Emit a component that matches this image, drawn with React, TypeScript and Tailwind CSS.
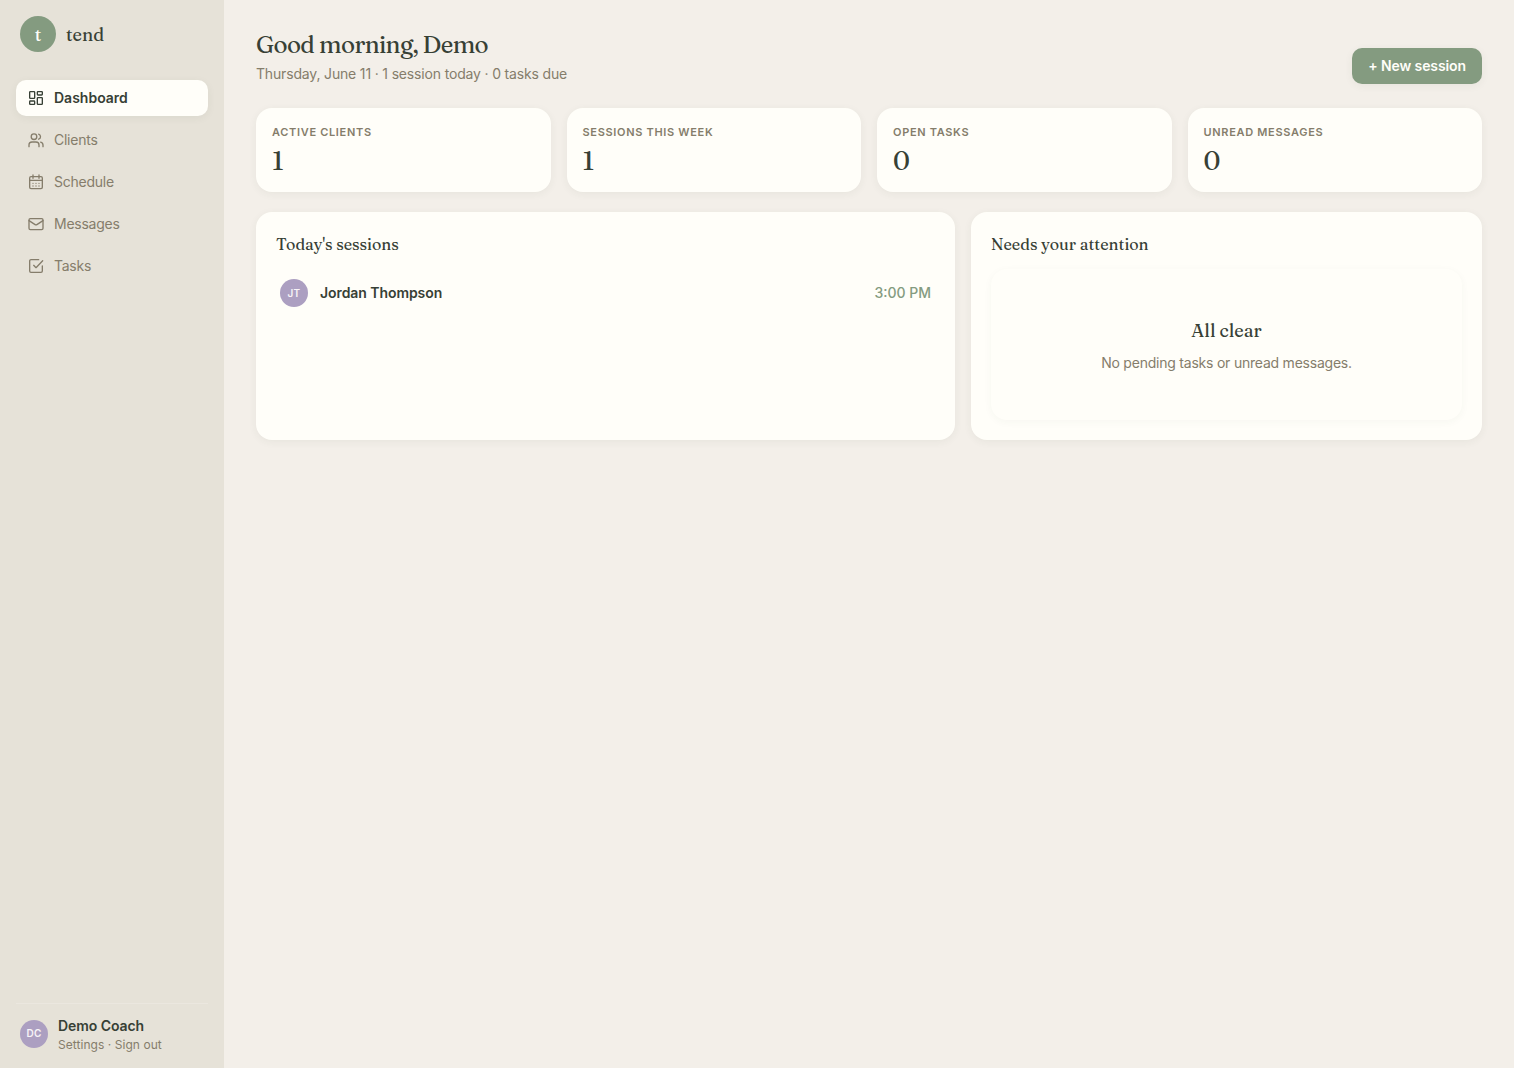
import React from 'react';

interface IconProps {
    children: React.ReactNode;
}

interface NavItem {
    label: string;
    icon: React.ReactNode;
    active?: boolean;
}

interface Stat {
    label: string;
    value: string;
}

function Icon({ children }: IconProps) {
    return (
        <svg className="h-4 w-4 shrink-0" viewBox="0 0 24 24" fill="none" stroke="currentColor" strokeWidth="2" strokeLinecap="round" strokeLinejoin="round">
            {children}
        </svg>
    );
}

const navItems: NavItem[] = [
    {
        label: "Dashboard",
        active: true,
        icon: (
            <Icon>
                <rect x="2.5" y="2.5" width="7.5" height="10" rx="1" />
                <rect x="14" y="2.5" width="7.5" height="5" rx="1" />
                <rect x="14" y="11.5" width="7.5" height="10" rx="1" />
                <rect x="2.5" y="16.5" width="7.5" height="5" rx="1" />
            </Icon>
        ),
    },
    {
        label: "Clients",
        icon: (
            <Icon>
                <circle cx="9" cy="7" r="4.2" />
                <path d="M1.5 22v-2.5a4.5 4.5 0 0 1 4.5-4.5h6a4.5 4.5 0 0 1 4.5 4.5V22" />
                <path d="M16 3.2a4 4 0 0 1 0 7.6" />
                <path d="M19 15.2a4.5 4.5 0 0 1 3.5 4.3V22" />
            </Icon>
        ),
    },
    {
        label: "Schedule",
        icon: (
            <Icon>
                <rect x="2.5" y="4" width="19" height="18" rx="2" />
                <path d="M7.5 1.5v5M16.5 1.5v5M2.5 9.5h19" />
                <path d="M7.5 14h.01M12 14h.01M16.5 14h.01M7.5 18h.01M12 18h.01M16.5 18h.01" />
            </Icon>
        ),
    },
    {
        label: "Messages",
        icon: (
            <Icon>
                <rect x="1.5" y="4" width="21" height="16.5" rx="2" />
                <path d="M1.5 7l9.2 6a2.4 2.4 0 0 0 2.6 0l9.2-6" />
            </Icon>
        ),
    },
    {
        label: "Tasks",
        icon: (
            <Icon>
                <path d="M21.5 12v7.5a2 2 0 0 1-2 2h-15a2 2 0 0 1-2-2v-15a2 2 0 0 1 2-2H16" />
                <path d="M8.5 11l3.5 3.5L22 4" />
            </Icon>
        ),
    },
];

const stats: Stat[] = [
    { label: "Active clients", value: "1" },
    { label: "Sessions this week", value: "1" },
    { label: "Open tasks", value: "0" },
    { label: "Unread messages", value: "0" },
];

function Avatar({ initials }: { initials: string }) {
    return (
        <div className="flex h-7 w-7 shrink-0 items-center justify-center rounded-full bg-[#ac9fc1] text-[10px] font-semibold tracking-[0.2px] text-[#f7f3f7]">
            {initials}
        </div>
    );
}

function Sidebar() {
    return (
        <aside className="flex w-56 shrink-0 flex-col bg-[#e6e2d8] p-4">
            <div className="flex items-center gap-2.5 px-1 font-[Fraunces,'Liberation_Serif',serif] text-[18px]">
                <div className="flex h-9 w-9 items-center justify-center rounded-full bg-[#849b80] pt-0.5 text-[#fffef9]">t</div>
                <span className="pt-0.5">tend</span>
            </div>

            <nav className="mt-7 flex flex-col gap-1.5">
                {navItems.map((item) => (
                    <a
                        key={item.label}
                        href="#"
                        className={item.active
                            ? "flex h-9 items-center gap-2.5 rounded-[10px] bg-[#fffef9] px-3 font-semibold shadow-[0_2px_8px_rgba(58,68,56,0.06)]"
                            : "flex h-9 items-center gap-2.5 rounded-[10px] px-3 tracking-[-0.25px] text-[#857d6b]"}
                    >
                        {item.icon}
                        {item.label}
                    </a>
                ))}
            </nav>

            <div className="mt-auto flex items-center gap-2.5 border-t border-[#ebe7df] px-1 pt-[11px]">
                <Avatar initials="DC" />
                <div className="-mb-px">
                    <div className="text-sm font-semibold leading-[21px] tracking-[-0.07px]">Demo Coach</div>
                    <div className="text-xs leading-[17px] tracking-[0.05px] text-[#857d6b]">Settings · Sign out</div>
                </div>
            </div>
        </aside>
    );
}

export default function App() {
    return (
        <div className="flex h-screen bg-[#f3efe9] font-[Inter,sans-serif] text-sm text-[#374035]">
            <Sidebar />

            <main className="min-w-0 flex-1 px-8 pt-7">
                <header className="flex h-14 items-end justify-between">
                    <div>
                        <h1 className="font-[Fraunces,'Liberation_Serif',serif] text-2xl leading-[34px] tracking-[-0.65px]">Good morning, Demo</h1>
                        <p className="mt-0.5 leading-5 tracking-[-0.165px] text-[#857d6b]">Thursday, June 11 · 1 session today · 0 tasks due</p>
                    </div>
                    <button className="h-9 rounded-[10px] bg-[#849b80] px-4 font-semibold tracking-[-0.1px] text-[#fffef9] shadow-[0_2px_8px_rgba(58,68,56,0.06)]">+ New session</button>
                </header>

                <section className="mt-6 grid grid-cols-4 gap-4">
                    {stats.map((stat) => (
                        <div key={stat.label} className="h-[84.4px] rounded-2xl bg-[#fffef9] px-4 pt-4 shadow-[0_2px_8px_rgba(58,68,56,0.06)]">
                            <div className="text-[11px] font-semibold uppercase leading-4 tracking-[0.68px] text-[#857d6b]">{stat.label}</div>
                            <div className="mt-[5px] font-[Fraunces,'Liberation_Serif',serif] text-[26px] leading-8 [font-variation-settings:'opsz'_72]">{stat.value}</div>
                        </div>
                    ))}
                </section>

                <section className="mt-5 grid h-[228px] grid-cols-[minmax(0,1fr)_511px] gap-4">
                    <div className="rounded-2xl bg-[#fffef9] p-5 shadow-[0_2px_8px_rgba(58,68,56,0.06)]">
                        <h2 className="font-[Fraunces,'Liberation_Serif',serif] text-base leading-[25px]">Today's sessions</h2>
                        <div className="mt-3 flex h-12 items-center gap-3 px-1">
                            <Avatar initials="JT" />
                            <span className="font-semibold tracking-[-0.07px]">Jordan Thompson</span>
                            <span className="ml-auto font-medium text-[#849b80]">3:00 PM</span>
                        </div>
                    </div>

                    <div className="flex flex-col rounded-2xl bg-[#fffef9] p-5 shadow-[0_2px_8px_rgba(58,68,56,0.06)]">
                        <h2 className="font-[Fraunces,'Liberation_Serif',serif] text-base leading-[25px]">Needs your attention</h2>
                        <div className="mt-3 flex flex-1 flex-col items-center justify-center rounded-2xl bg-[#fffef9] pt-px shadow-[0_2px_8px_rgba(58,68,56,0.04)]">
                            <h3 className="font-[Fraunces,'Liberation_Serif',serif] text-lg leading-7">All clear</h3>
                            <p className="mt-2 leading-5 tracking-[-0.22px] text-[#857d6b]">No pending tasks or unread messages.</p>
                        </div>
                    </div>
                </section>
            </main>
        </div>
    );
}
